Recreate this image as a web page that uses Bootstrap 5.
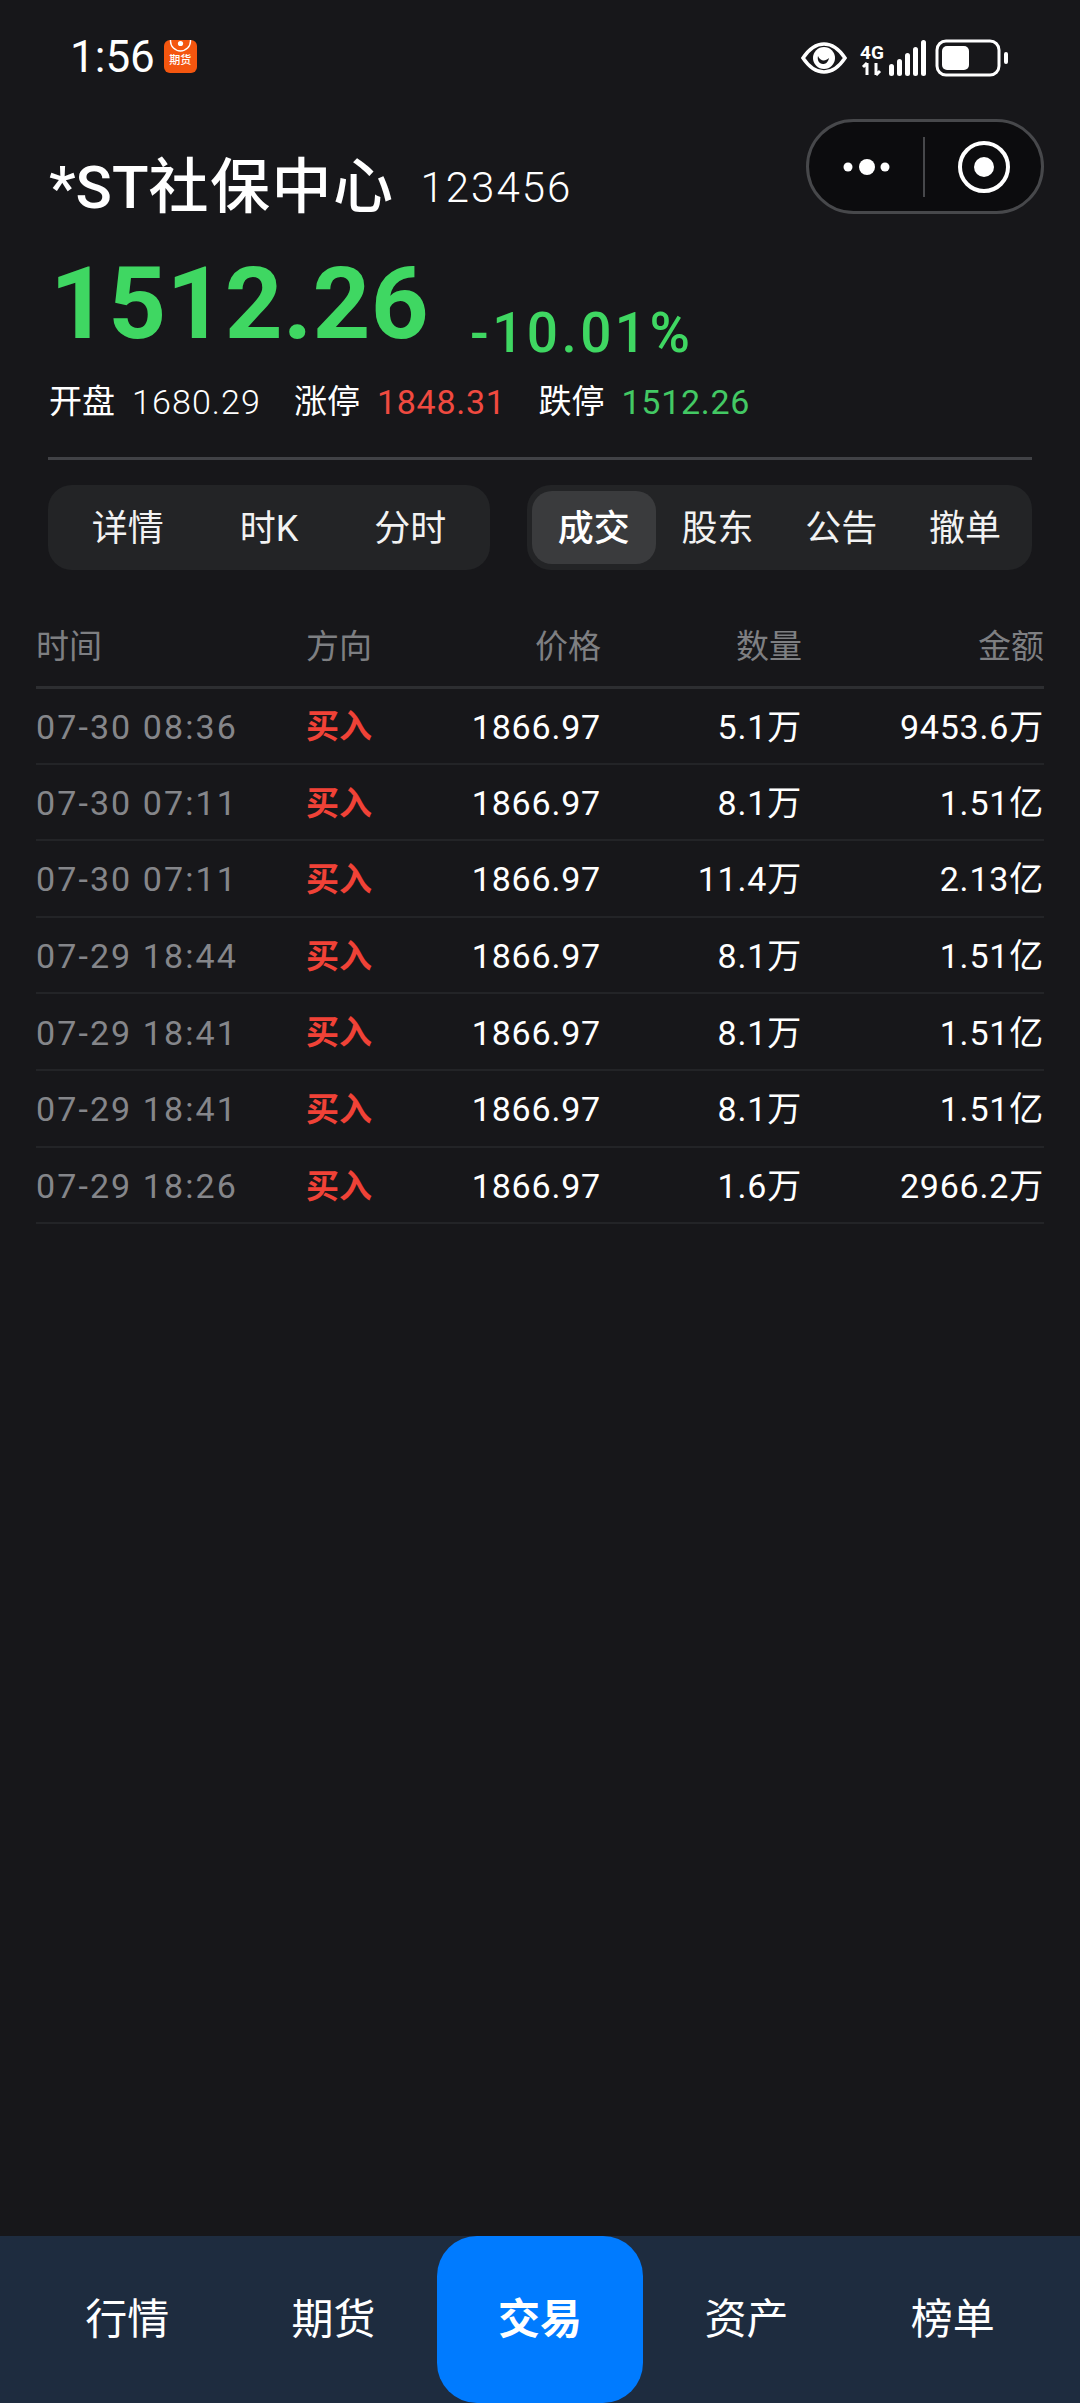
<!DOCTYPE html>
<html lang="zh-CN">

<head>
  <meta charset="UTF-8" />
  <meta name="viewport" content="width=device-width, initial-scale=1" />
  <title>*ST社保中心</title>
  <link href="https://cdn.jsdelivr.net/npm/bootstrap@5.3.0/dist/css/bootstrap.min.css" rel="stylesheet" />
  <style>
    body {
      background-color: #17171a;
      color: #fff;
      font-family: Roboto, "Noto Sans CJK SC", sans-serif;
      width: 1080px;
      height: 2403px;
      overflow: hidden;
    }

    .status-bar { height: 119px; padding: 34px 71px 0 70px; }
    .status-time { font-size: 44px; line-height: 46px; }
    .app-badge {
      position: relative;
      width: 33px; height: 33px; margin-left: 9px; margin-top: 6px;
      background: #f4560f; border-radius: 6px;
      font-size: 11px; line-height: 12px; padding-top: 15px; text-align: center; font-weight: 500;
      overflow: hidden;
    }
    .badge-arc { position: absolute; left: 0; top: 0; }
    .net-label { font-size: 19px; font-weight: 700; line-height: 19px; }
    .status-icons { margin-top: 5px; }

    .page-top { padding: 0 36px 0 49px; }
    .stock-title { font-size: 60px; font-weight: 500; line-height: 70px; margin-top: 34px; }
    .title-cjk { letter-spacing: 1.5px; }
    .stock-code { font-size: 42px; line-height: 50px; letter-spacing: 2px; margin-left: 26px; font-weight: 300; }

    .capsule {
      width: 238px; height: 95px;
      background: #0c0c0e; border: 3px solid #47484b; border-radius: 48px;
    }
    .capsule-sep { width: 2px; height: 60px; background: #47484b; margin-left: -2px; }

    .quote-row { margin-top: 36px; height: 90px; padding-left: 1px; }
    .quote-price { font-size: 101px; font-weight: 700; line-height: 90px; color: #3fd762; letter-spacing: .3px; }
    .quote-pct { font-size: 55px; font-weight: 500; line-height: 60px; color: #3fd762; margin-left: 41px; margin-bottom: -14px; letter-spacing: 3.4px; }

    .stats-row { margin-top: 31px; font-size: 33px; line-height: 44px; }
    .stats-row span { margin-right: 17px; }
    .stats-row .stat-val { margin-right: 33px; font-size: 34px; letter-spacing: 1.1px; font-weight: 300; }
    .stats-row .val-red { color: #f04a40; font-weight: 400; letter-spacing: .7px; }
    .stats-row .val-green { color: #43c964; font-weight: 400; letter-spacing: .7px; }

    .top-rule { height: 3px; margin: 33px 48px 0; background: #414246; }

    .tab-strip { padding: 25px 48px 0; gap: 37px; }
    .seg {
      height: 85px; background: #232426; border-radius: 24px;
      font-size: 36px; align-items: center; padding: 0 9px;
    }
    .seg-a { width: 442px; }
    .seg-b { width: 505px; padding: 0 5px; }
    .seg-item { flex: 1 1 0; text-align: center; line-height: 76px; height: 73px; border-radius: 20px; color: #f2f2f2; }
    .seg-item.on { background: #3a3b3d; color: #fff; font-weight: 500; }

    .trade-wrap { padding: 0 36px; margin-top: 35px; }
    .trade-table {
      --bs-table-bg: transparent;
      --bs-table-color: #fff;
      --bs-table-border-color: #232427;
      table-layout: fixed;
      width: 1008px;
      margin: 0;
    }
    .trade-table th, .trade-table td { padding: 0; font-size: 34px; vertical-align: middle; border-bottom-width: 2px; }
    .trade-table th { height: 82px; padding-top: 2px; color: #7e7f82; font-weight: 400; font-size: 33px; border-bottom: 3px solid #2d2e31; }
    .trade-table td { height: 76.6px; padding-top: 3px; letter-spacing: .8px; }
    .trade-table .cell-time { color: #85868a; letter-spacing: 2.1px; font-weight: 400; }
    .trade-table .cell-side { color: #f04237; font-weight: 700; font-size: 33px; letter-spacing: 0; }

    .bottom-tabs { height: 167px; background: #1e2c3f; padding: 0 24px; }
    .bottom-tabs .nav-link {
      flex: 1 1 0; color: #fff; font-size: 42px; line-height: 167px; padding: 0; text-align: center;
    }
    .bottom-tabs .nav-link.active {
      background: #007bff; font-weight: 700; border-radius: 40px;
    }
  </style>
</head>

<body class="d-flex flex-column">
  <div class="status-bar d-flex justify-content-between align-items-start">
    <div class="d-flex">
      <div class="status-time">1:56</div>
      <div class="app-badge">
        <svg class="badge-arc" width="33" height="15" viewBox="0 0 33 15">
          <circle cx="16.5" cy="1" r="10" fill="none" stroke="#fff" stroke-width="1.4" />
          <circle cx="16.5" cy="3.5" r="2.6" fill="#fff" />
        </svg>
        期货
      </div>
    </div>
    <div class="status-icons d-flex align-items-center gap-2">
      <svg width="46" height="34" viewBox="0 0 46 34">
        <path d="M2 17C8 8 15 3 23 3s15 5 21 14c-6 9-13 14-21 14S8 26 2 17z" fill="none" stroke="#fff" stroke-width="3.5" />
        <circle cx="23" cy="17" r="11" fill="#fff" />
        <path d="M17 15c2 5 7 6 11 2-1 5-4 6-6 6-4 0-6-4-5-8z" fill="#17171a" />
      </svg>
      <div class="d-flex align-items-end ms-1">
        <div class="text-center me-1">
          <div class="net-label">4G</div>
          <svg width="26" height="14" viewBox="0 0 26 14" class="d-block">
            <path d="M8 1v12M8 1L4 5M17 1v12M17 13l4-4" stroke="#fff" stroke-width="3" fill="none" />
          </svg>
        </div>
        <svg width="38" height="36" viewBox="0 0 38 36">
          <rect x="0" y="24" width="5" height="12" rx="2.5" fill="#fff" />
          <rect x="8" y="19" width="5" height="17" rx="2.5" fill="#fff" />
          <rect x="16" y="13" width="5" height="23" rx="2.5" fill="#fff" />
          <rect x="24" y="7" width="5" height="29" rx="2.5" fill="#fff" />
          <rect x="32" y="0" width="5" height="36" rx="2.5" fill="#fff" />
        </svg>
      </div>
      <svg width="74" height="38" viewBox="0 0 74 38">
        <rect x="2" y="2" width="62" height="34" rx="9" fill="none" stroke="#fff" stroke-width="3" />
        <rect x="7" y="7" width="27" height="24" rx="5" fill="#fff" />
        <rect x="69" y="13" width="4" height="12" rx="2" fill="#fff" />
      </svg>
    </div>
  </div>

  <div class="page-top">
    <div class="d-flex justify-content-between align-items-start">
      <div class="d-flex align-items-center stock-title">
        <span>*ST<span class="title-cjk">社保中心</span></span>
        <span class="stock-code">123456</span>
      </div>
      <div class="capsule d-flex align-items-center justify-content-between">
        <svg width="116" height="40" viewBox="0 0 116 40">
          <circle cx="39" cy="20" r="4.5" fill="#fff" />
          <circle cx="58" cy="20" r="8" fill="#fff" />
          <circle cx="76" cy="20" r="4.5" fill="#fff" />
        </svg>
        <div class="capsule-sep"></div>
        <svg width="116" height="56" viewBox="0 0 116 56">
          <circle cx="59" cy="28" r="24" fill="none" stroke="#fff" stroke-width="4" />
          <circle cx="59" cy="28" r="10" fill="#fff" />
        </svg>
      </div>
    </div>

    <div class="quote-row d-flex align-items-end">
      <div class="quote-price">1512.26</div>
      <div class="quote-pct">-10.01%</div>
    </div>

    <div class="stats-row d-flex">
      <span>开盘</span><span class="stat-val">1680.29</span>
      <span>涨停</span><span class="stat-val val-red">1848.31</span>
      <span>跌停</span><span class="stat-val val-green">1512.26</span>
    </div>
  </div>

  <div class="top-rule"></div>

  <div class="tab-strip d-flex">
    <div class="seg seg-a d-flex">
      <div class="seg-item">详情</div>
      <div class="seg-item">时K</div>
      <div class="seg-item">分时</div>
    </div>
    <div class="seg seg-b d-flex">
      <div class="seg-item on">成交</div>
      <div class="seg-item">股东</div>
      <div class="seg-item">公告</div>
      <div class="seg-item">撤单</div>
    </div>
  </div>

  <div class="trade-wrap flex-grow-1">
    <table class="table trade-table">
      <colgroup>
        <col style="width: 270px" />
        <col style="width: 120px" />
        <col style="width: 175px" />
        <col style="width: 201px" />
        <col style="width: 242px" />
      </colgroup>
      <thead>
        <tr>
          <th>时间</th>
          <th>方向</th>
          <th class="text-end">价格</th>
          <th class="text-end">数量</th>
          <th class="text-end">金额</th>
        </tr>
      </thead>
      <tbody id="tradeRows"></tbody>
    </table>
  </div>

  <nav class="nav bottom-tabs flex-nowrap">
    <a class="nav-link" href="#">行情</a>
    <a class="nav-link" href="#">期货</a>
    <a class="nav-link active" href="#">交易</a>
    <a class="nav-link" href="#">资产</a>
    <a class="nav-link" href="#">榜单</a>
  </nav>

  <script>
    const trades = [
      ['07-30 08:36', '5.1万', '9453.6万'],
      ['07-30 07:11', '8.1万', '1.51亿'],
      ['07-30 07:11', '11.4万', '2.13亿'],
      ['07-29 18:44', '8.1万', '1.51亿'],
      ['07-29 18:41', '8.1万', '1.51亿'],
      ['07-29 18:41', '8.1万', '1.51亿'],
      ['07-29 18:26', '1.6万', '2966.2万']
    ];
    document.getElementById('tradeRows').innerHTML = trades.map(t => `
      <tr>
        <td class="cell-time">${t[0]}</td>
        <td class="cell-side">买入</td>
        <td class="text-end">1866.97</td>
        <td class="text-end">${t[1]}</td>
        <td class="text-end">${t[2]}</td>
      </tr>`).join('');
  </script>
  <script src="https://cdn.jsdelivr.net/npm/bootstrap@5.3.0/dist/js/bootstrap.bundle.min.js"></script>
</body>

</html>
